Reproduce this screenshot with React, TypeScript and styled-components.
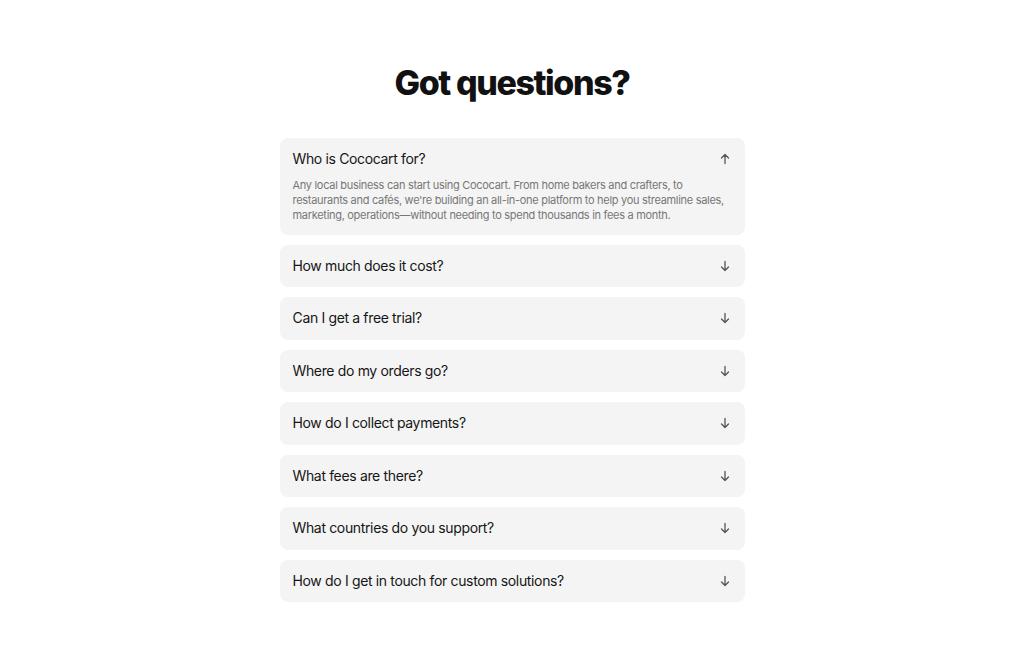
import styled, { createGlobalStyle } from "styled-components";
import { useState } from "react";

const GlobalStyle = createGlobalStyle`
  body {
    margin: 0;
    background: #ffffff;
    font-family: Inter, "Noto Sans", sans-serif;
    color: #141414;
  }
`;

const Section = styled.section`
  display: flex;
  flex-direction: column;
  align-items: center;
  padding-top: 61px;
`;

const Title = styled.h2`
  margin: 0 0 33px;
  font-size: 34px;
  font-weight: 800;
  letter-spacing: -1.4px;
  line-height: 44px;
  color: #111;
`;

const List = styled.div`
  width: 465px;
  display: flex;
  flex-direction: column;
  gap: 10px;
`;

const Item = styled.div`
  background: #f4f4f4;
  border-radius: 8px;
  padding: 12px 14px 12px 13px;
`;

const Question = styled.button`
  all: unset;
  width: 100%;
  display: flex;
  align-items: center;
  justify-content: space-between;
  cursor: pointer;
  font-size: 14px;
  letter-spacing: -0.35px;
  line-height: 18.5px;
  color: #161616;
`;

const Arrow = styled.svg<{ $open: boolean }>`
  width: 12px;
  height: 12px;
  flex-shrink: 0;
  color: #555;
  transform: rotate(${(p) => (p.$open ? 180 : 0)}deg);
`;

const Answer = styled.p`
  margin: 9px 0 0;
  padding-right: 1px;
  font-size: 11px;
  letter-spacing: -0.3px;
  line-height: 15px;
  color: #777;
`;

const faqs = [
  {
    q: "Who is Cococart for?",
    a: "Any local business can start using Cococart. From home bakers and crafters, to restaurants and cafés, we're building an all-in-one platform to help you streamline sales, marketing, operations\u2014without needing to spend thousands in fees a month.",
  },
  { q: "How much does it cost?", a: "" },
  { q: "Can I get a free trial?", a: "" },
  { q: "Where do my orders go?", a: "" },
  { q: "How do I collect payments?", a: "" },
  { q: "What fees are there?", a: "" },
  { q: "What countries do you support?", a: "" },
  { q: "How do I get in touch for custom solutions?", a: "" },
];

const FaqItem = ({ q, a, open, onToggle }: { q: string; a: string; open: boolean; onToggle: () => void }) => (
  <Item>
    <Question onClick={onToggle}>
      {q}
      <Arrow $open={open} viewBox="0 0 12 12" fill="none" stroke="currentColor" strokeWidth="1.3" strokeLinecap="round" strokeLinejoin="round">
        <path d="M6 1.5v9M2.5 7l3.5 3.5L9.5 7" />
      </Arrow>
    </Question>
    {open && a && <Answer>{a}</Answer>}
  </Item>
);

export default function App() {
  const [open, setOpen] = useState(0);
  return (
    <>
      <GlobalStyle />
      <Section>
        <Title>Got questions?</Title>
        <List>
          {faqs.map((f, i) => (
            <FaqItem key={f.q} q={f.q} a={f.a} open={open === i} onToggle={() => setOpen(open === i ? -1 : i)} />
          ))}
        </List>
      </Section>
    </>
  );
}
